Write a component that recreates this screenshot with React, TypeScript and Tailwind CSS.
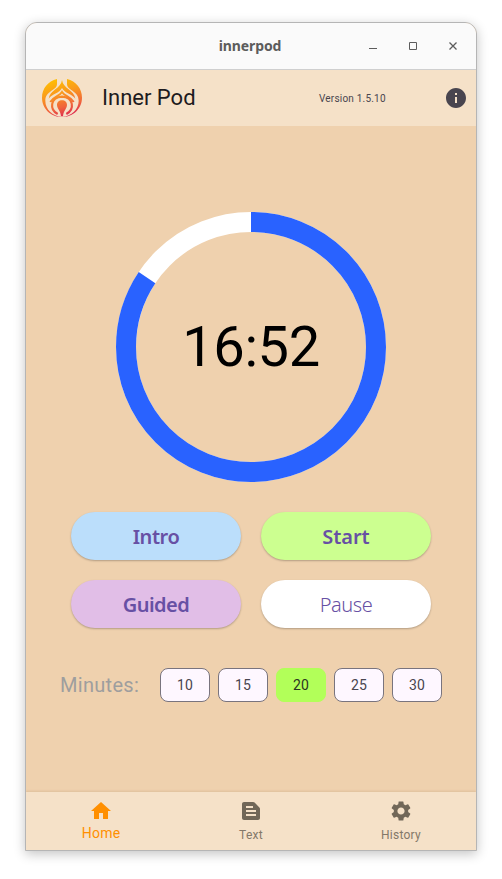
import { MdHome, MdInfo, MdSettings, MdTextSnippet } from "react-icons/md";

function Logo() {
  return (
    <svg className="h-10 w-10" viewBox="0 0 120 120" fill="none" stroke="url(#flame)">
      <defs>
        <linearGradient id="flame" gradientUnits="userSpaceOnUse" x1="30" y1="0" x2="65" y2="118">
          <stop offset="0" stopColor="#ffc400" />
          <stop offset="0.4" stopColor="#fa9a1c" />
          <stop offset="0.75" stopColor="#f0653c" />
          <stop offset="1" stopColor="#dc2850" />
        </linearGradient>
      </defs>
      <g fill="url(#flame)" stroke="none">
        <path d="M45 3C18 9 0 32 0 59c0 32 26 58 60 58-29-3-50-23-50-49C10 38 45 38 45 18Z" />
        <path d="M75 3c27 6 45 29 45 56 0 32-26 58-60 58 29-3 50-23 50-49C110 38 75 38 75 18Z" />
        <path d="M60 6C57 32 23 36 20 62 30 47 52 46 60 30c8 16 30 17 40 32C97 36 63 32 60 6Z" />
        <path d="M60 67c-9 0-15 6-15 14 0 11 11 18 12 34h6c1-16 12-23 12-34 0-8-6-14-15-14Z" />
      </g>
      <path d="M25 72c8-16 27-17 35-30 8 13 27 14 35 30" strokeWidth="6" />
      <path d="M47 108C22 94 24 58 60 56c36 2 38 38 13 52" strokeWidth="6.5" />
    </svg>
  );
}

function TitleBar() {
  return (
    <div className="flex h-[47px] shrink-0 items-center border-b border-[#cfcfcf] bg-[#fafafa] text-[#5c5c5c]">
      <div className="w-[332px] pl-[116px] text-center font-['Noto_Sans',sans-serif] text-[14px] font-bold leading-5 tracking-[-0.1px]">
        innerpod
      </div>
      <svg className="ml-[9px] h-4 w-[98px]" viewBox="0 0 98 16" fill="none" stroke="currentColor">
        <path d="M2 10.5h8" />
        <path d="M42.5 4.5h7v7h-7z" />
        <path d="M82.5 4.5l7 7m0-7l-7 7" strokeWidth="1.3" />
      </svg>
    </div>
  );
}

const FULL = 20 * 60;
const LEFT = 16 * 60 + 52;

function Timer() {
  const length = 2 * Math.PI * 125;
  return (
    <div className="grid h-[270px] w-[270px] place-items-center">
      <svg className="col-start-1 row-start-1 h-[270px] w-[270px] -rotate-90" viewBox="0 0 270 270" fill="none" strokeWidth="20">
        <circle cx="135" cy="135" r="125" stroke="#ffffff" />
        <circle cx="135" cy="135" r="125" stroke="#2962ff" strokeDasharray={`${(length * LEFT) / FULL} ${length}`} />
      </svg>
      <div className="col-start-1 row-start-1 text-[56px] leading-[64px] tracking-[-0.35px] text-black">16:52</div>
    </div>
  );
}

const actions = [
  { label: "Intro", style: "bg-[#bbdefb] font-semibold tracking-[-0.45px]" },
  { label: "Start", style: "bg-[#ccff90] font-semibold tracking-[-0.05px]" },
  { label: "Guided", style: "bg-[#e1bee7] font-semibold tracking-[-0.55px]" },
  { label: "Pause", style: "bg-white font-light tracking-[-0.45px]" },
];

const tabs = [
  { label: "Home", Icon: MdHome, icon: "text-[#ff8f00]", text: "text-[14px] tracking-[0.25px] text-[#ff8f00]" },
  { label: "Text", Icon: MdTextSnippet, icon: "text-[#716758]", text: "text-[12px] tracking-[0.25px] text-[#837869] pt-[2px]" },
  { label: "History", Icon: MdSettings, icon: "text-[#716758]", text: "text-[12px] tracking-[0.25px] text-[#837869] pt-[2px]" },
];

export default function App() {
  return (
    <div className="h-[879px] w-[502px] bg-white pl-[25px] pt-[22px] font-[Roboto,sans-serif]">
      <div className="flex h-[829px] w-[452px] flex-col overflow-hidden rounded-t-[12px] border border-[#b5b5b5] bg-[#efd1ae] shadow-[0_3px_12px_rgba(0,0,0,0.24)]">
        <TitleBar />
        <header className="flex h-14 shrink-0 items-center bg-[#f5e1c8] pl-4">
          <Logo />
          <h1 className="ml-5 w-[217px] text-[22px] leading-7 text-[#1d1b20]">Inner Pod</h1>
          <span className="w-[125px] text-[10px] tracking-[0.2px] text-[#49454f]">Version 1.5.10</span>
          <MdInfo className="h-6 w-6 shrink-0 text-[#49454f]" />
        </header>
        <main className="flex flex-1 flex-col items-center pt-[86px]">
          <Timer />
          <div className="mt-[30px] grid grid-cols-2 gap-5">
            {actions.map(({ label, style }) => (
              <button
                key={label}
                className={`h-12 w-[170px] rounded-full pt-[2px] font-['Noto_Sans',sans-serif] text-[20px] leading-7 text-[#6750a4] shadow-[0_1px_2px_rgba(0,0,0,0.26)] ${style}`}
              >
                {label}
              </button>
            ))}
          </div>
          <div className="mt-10 flex w-full items-center gap-2 pl-[34px]">
            <span className="w-[92px] text-[20px] tracking-[0.3px] text-[#9e9e9e]">Minutes:</span>
            {[10, 15, 20, 25, 30].map((m) => (
              <button
                key={m}
                className={`h-[34px] w-[50px] rounded-[8px] border text-[14px] tracking-[0.1px] ${m === 20 ? "border-[#b2ff59] bg-[#b2ff59] text-[#2b3322]" : "border-[#79747e] bg-[#fef7ff] text-[#49454f]"}`}
              >
                {m}
              </button>
            ))}
          </div>
        </main>
        <nav className="grid h-[58px] shrink-0 grid-cols-3 bg-[#f5e1c8] pt-[7px] shadow-[0_-1px_2px_rgba(110,70,20,0.13)]">
          {tabs.map(({ label, Icon, icon, text }) => (
            <div key={label} className="flex flex-col items-center">
              <Icon className={`h-6 w-6 ${icon}`} />
              <span className={`leading-5 ${text}`}>{label}</span>
            </div>
          ))}
        </nav>
      </div>
    </div>
  );
}
